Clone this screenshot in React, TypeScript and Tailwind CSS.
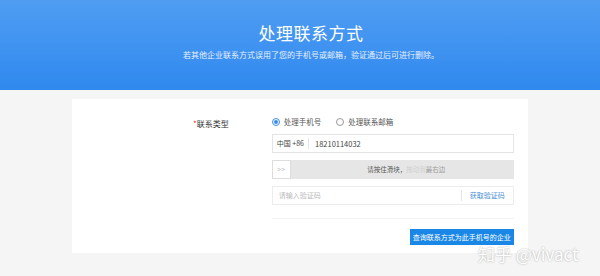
import React from "react";

const FONT = { fontFamily: '"Noto Sans CJK SC", "Noto Sans", sans-serif' };

function Header() {
  return (
    <div className="relative h-[90px] w-full overflow-hidden bg-gradient-to-b from-[#4f9df3] to-[#2f89ee]">
      <div className="flex flex-col items-center pl-[22px] pt-[21px]">
        <h1 className="text-[17px] leading-[24px] tracking-[0.5px] text-white">处理联系方式</h1>
        <p className="mt-[4px] text-[8px] leading-[12px] text-[#e6f0ff]">
          若其他企业联系方式误用了您的手机号或邮箱，验证通过后可进行删除。
        </p>
      </div>
    </div>
  );
}

function Radio({ checked, label }: { checked?: boolean; label: string }) {
  return (
    <label className="flex items-center gap-[4px]">
      <span
        className={`flex h-[8px] w-[8px] items-center justify-center rounded-full border ${
          checked ? "border-[#3b8ded]" : "border-[#999]"
        }`}
      >
        {checked ? <span className="h-[4px] w-[4px] rounded-full bg-[#3b8ded]" /> : null}
      </span>
      <span className="text-[7.5px] text-[#555]">{label}</span>
    </label>
  );
}

function Form() {
  return (
    <div className="flex gap-[43px] pl-[121px] pt-[18px]">
      <div className="pt-[1px] text-[8px] text-[#333]">
        <span className="text-[#e33]">*</span>联系类型
      </div>
      <div className="flex w-[242px] flex-col">
        <div className="flex h-[10px] items-center gap-[15px]">
          <Radio checked label="处理手机号" />
          <Radio label="处理联系邮箱" />
        </div>
        {/* phone */}
        <div className="mt-[7px] flex h-[19px] items-center border border-[#e4e4e4] text-[7px] text-[#444]">
          <span className="px-[4px]">中国 +86</span>
          <span className="h-[11px] w-px bg-[#e4e4e4]" />
          <span className="pl-[6px] text-[7.5px]">18210114032</span>
        </div>
        {/* slider */}
        <div className="mt-[7px] flex h-[19px] items-center bg-[#e6e6e6]">
          <div className="flex h-full w-[19px] items-center justify-center border border-[#ddd] bg-white text-[7px] text-[#bbb]">
            &gt;&gt;
          </div>
          <div className="flex flex-1 justify-center pl-[8px] text-[6.5px] text-[#555]">
            请按住滑块，<span className="text-[#d0d0d0]">拖动到</span>
            <span className="text-[#999]">最右边</span>
          </div>
        </div>
        {/* code */}
        <div className="mt-[7px] flex h-[19px] items-center border border-[#ececec] text-[7px]">
          <span className="flex-1 pl-[6px] text-[#bbb]">请输入验证码</span>
          <span className="h-[11px] w-px bg-[#e4e4e4]" />
          <span className="px-[8px] text-[#4d8fd8]">获取验证码</span>
        </div>
        <div className="mt-[13px] h-px w-full bg-[#f3f3f3]" />
        <div className="mt-[10px] flex justify-end">
          <button className="h-[16px] w-[104px] bg-[#1a87e6] text-[7px] text-white">
            查询联系方式为此手机号的企业
          </button>
        </div>
      </div>
    </div>
  );
}

export default function App() {
  return (
    <div className="relative h-[276px] w-[600px] overflow-hidden bg-[#f5f5f5]" style={FONT}>
      <Header />
      <div className="px-[72px] pt-[9px]">
        <div className="h-[154px] bg-white">
          <Form />
        </div>
      </div>
      <div className="absolute left-[478px] top-[244px] text-[17px] leading-[20px] text-white [text-shadow:0_0_2px_rgba(0,0,0,0.35)]">
        知乎 @vivact
      </div>
    </div>
  );
}
